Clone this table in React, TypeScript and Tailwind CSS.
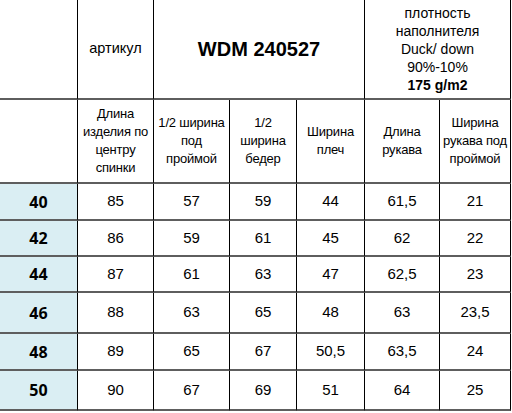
import React from "react";

const rows = [
  { size: "40", vals: ["85", "57", "59", "44", "61,5", "21"], h: "h-[37px]" },
  { size: "42", vals: ["86", "59", "61", "45", "62", "22"], h: "h-[36px]" },
  { size: "44", vals: ["87", "61", "63", "47", "62,5", "23"], h: "h-[36px]" },
  { size: "46", vals: ["88", "63", "65", "48", "63", "23,5"], h: "h-[41px]" },
  { size: "48", vals: ["89", "65", "67", "50,5", "63,5", "24"], h: "h-[37px]" },
  { size: "50", vals: ["90", "67", "69", "51", "64", "25"], h: "h-[40px]" },
];

const labels = [
  ["Длина", "изделия по", "центру", "спинки"],
  ["1/2 ширина", "под", "проймой"],
  ["1/2", "ширина", "бедер"],
  ["Ширина", "плеч"],
  ["Длина", "рукава"],
  ["Ширина", "рукава под", "проймой"],
];

const cell = "flex items-center justify-center text-center whitespace-nowrap border-r border-r-black border-b-2 border-b-[#5e5e5e]";

export default function App() {
  return (
    <div className="w-[512px] h-[413px] bg-white text-black font-['Liberation_Sans',Arial,sans-serif]">
      <div className="grid grid-cols-[78px_76px_76px_67px_68px_75px_71px]">
        {/* header row 1 */}
        <div className={`${cell} h-[100px]`} />
        <div className={`${cell} h-[100px] text-[14.5px]`}>артикул</div>
        <div className={`${cell} h-[100px] col-span-3 text-[20px] font-bold`}>WDM 240527</div>
        <div className={`${cell} h-[100px] col-span-2 flex-col text-[14px] leading-[18px]`}>
          <span>плотность</span>
          <span>наполнителя</span>
          <span>Duck/ down</span>
          <span>90%-10%</span>
          <span className="font-bold">175 g/m2</span>
        </div>

        {/* header row 2 */}
        <div className={`${cell} h-[84px]`} />
        {labels.map((l, i) => (
          <div key={i} className={`${cell} h-[84px] flex-col text-[13px] tracking-[-0.2px] leading-[18px]`}>
            {l.map((t) => (
              <span key={t}>{t}</span>
            ))}
          </div>
        ))}

        {/* data */}
        {rows.map((r) => (
          <React.Fragment key={r.size}>
            <div className={`${cell} ${r.h} bg-[#daeef3] font-['Open_Sans',sans-serif] font-bold text-[16px]`}>{r.size}</div>
            {r.vals.map((v, i) => (
              <div key={i} className={`${cell} ${r.h} text-[15px]`}>
                {v}
              </div>
            ))}
          </React.Fragment>
        ))}
      </div>
    </div>
  );
}
